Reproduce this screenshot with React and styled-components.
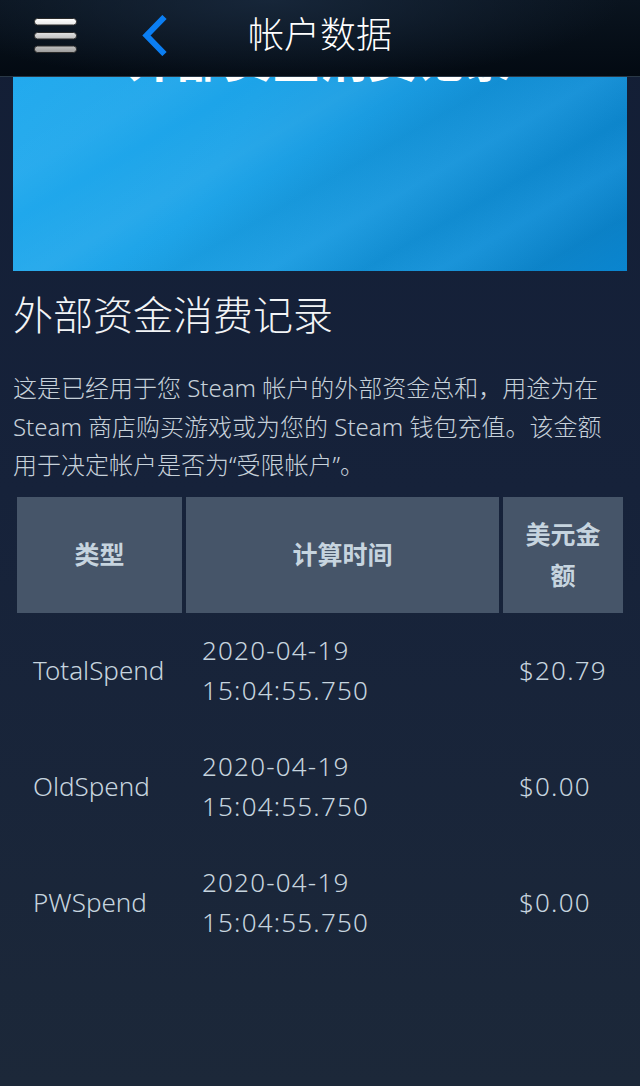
import React from 'react';
import styled, { createGlobalStyle } from 'styled-components';

const GlobalStyle = createGlobalStyle`
  html, body { margin: 0; padding: 0; background: #1b2838; }
  body { font-family: "Noto Sans", "Noto Sans CJK SC", sans-serif; }
  * { box-sizing: border-box; }
`;

const Page = styled.div`
  min-height: 1086px;
  display: flex;
  flex-direction: column;
  background: linear-gradient(180deg, #131e35 0%, #16223a 45%, #1c2839 100%);
`;

const Header = styled.header`
  height: 77px;
  border-bottom: 1px solid #2a3846;
  padding-bottom: 6px;
  display: grid;
  grid-template-columns: 1fr auto 1fr;
  align-items: center;
  background:
    radial-gradient(ellipse 55% 110% at 42% 0%, rgba(24, 40, 60, 0.9) 0%, rgba(24, 40, 60, 0) 100%),
    linear-gradient(180deg, #0a141f 0%, #030a12 100%);
`;

const NavLeft = styled.div`
  display: flex;
  align-items: center;
  padding-left: 34px;
  gap: 65px;
`;

const IconButton = styled.button`
  border: 0;
  background: none;
  padding: 0;
  display: flex;
  cursor: pointer;
`;

const Title = styled.h1`
  margin: 0;
  font-size: 36px;
  line-height: 1;
  font-weight: 300;
  color: #ffffff;
`;

const Content = styled.main`
  padding: 0 13px;
  display: flex;
  flex-direction: column;
`;

const Banner = styled.div`
  height: 194px;
  overflow: hidden;
  display: flex;
  justify-content: center;
  background:
    linear-gradient(150deg,
      rgba(255,255,255,0) 0%,
      rgba(255,255,255,0.04) 18%,
      rgba(255,255,255,0) 26%,
      rgba(255,255,255,0.05) 38%,
      rgba(255,255,255,0.01) 44%,
      rgba(0,0,0,0.03) 52%,
      rgba(255,255,255,0.045) 62%,
      rgba(0,0,0,0.04) 72%,
      rgba(255,255,255,0.04) 80%,
      rgba(0,0,0,0.05) 90%,
      rgba(0,0,0,0) 100%),
    linear-gradient(120deg, #22aaee 0%, #1ca3e8 35%, #1494db 65%, #0a85cf 100%);
`;

const BannerText = styled.div`
  margin-top: -42px;
  font-size: 48px;
  line-height: 48px;
  font-weight: 700;
  color: #ffffff;
  white-space: nowrap;
`;

const Heading = styled.h2`
  margin: 20px 0 0;
  font-size: 40px;
  line-height: 48px;
  font-weight: 300;
  color: #f2f4f6;
`;

const Description = styled.p`
  margin: 30px 10px 0 0;
  font-size: 24px;
  line-height: 38.5px;
  font-weight: 300;
  color: #c7d1da;
`;

const Table = styled.div`
  margin-top: 8px;
  padding: 4px;
  display: grid;
  grid-template-columns: 165px 1fr 120px;
  gap: 4px;
`;

const HeadCell = styled.div`
  background: #465569;
  padding: 17px 16px;
  display: flex;
  align-items: center;
  justify-content: center;
  text-align: center;
  font-size: 25px;
  line-height: 41px;
  font-weight: 700;
  color: #c6d4df;
`;

const Cell = styled.div`
  padding: 13px 16px 19px;
  display: flex;
  align-items: center;
  font-size: 26px;
  line-height: 40px;
  font-weight: 300;
  color: #c6d4df;
  letter-spacing: ${(p) => (p.$numeric ? '1.2px' : '0')};
`;

const HamburgerIcon = () => (
  <svg width="43" height="35" viewBox="0 0 43 35">
    <defs>
      <linearGradient id="hb1" x1="0" y1="0" x2="0" y2="1">
        <stop offset="0" stopColor="#ffffff" />
        <stop offset="1" stopColor="#e8e8e8" />
      </linearGradient>
      <linearGradient id="hb2" x1="0" y1="0" x2="0" y2="1">
        <stop offset="0" stopColor="#e2e2e2" />
        <stop offset="1" stopColor="#bdbdbd" />
      </linearGradient>
      <linearGradient id="hb3" x1="0" y1="0" x2="0" y2="1">
        <stop offset="0" stopColor="#c2c2c2" />
        <stop offset="1" stopColor="#9a9a9a" />
      </linearGradient>
    </defs>
    <rect x="0.5" y="0.5" width="42" height="6.5" rx="3" fill="url(#hb1)" stroke="#2a2a2a" strokeWidth="1" />
    <rect x="0.5" y="14.5" width="42" height="6.5" rx="3" fill="url(#hb2)" stroke="#2a2a2a" strokeWidth="1" />
    <rect x="0.5" y="28" width="42" height="6.5" rx="3" fill="url(#hb3)" stroke="#2a2a2a" strokeWidth="1" />
  </svg>
);

const BackIcon = () => (
  <svg width="25" height="41" viewBox="0 0 25 41">
    <polyline
      points="22.5,2 4.5,20.5 22.5,39"
      fill="none"
      stroke="#0b7ef2"
      strokeWidth="6"
      strokeLinejoin="miter"
      strokeLinecap="butt"
    />
  </svg>
);

const rows = [
  { type: 'TotalSpend', time: '2020-04-19 15:04:55.750', amount: '$20.79' },
  { type: 'OldSpend', time: '2020-04-19 15:04:55.750', amount: '$0.00' },
  { type: 'PWSpend', time: '2020-04-19 15:04:55.750', amount: '$0.00' },
];

export default function App() {
  return (
    <>
      <GlobalStyle />
      <Page>
        <Header>
          <NavLeft>
            <IconButton aria-label="菜单"><HamburgerIcon /></IconButton>
            <IconButton aria-label="返回"><BackIcon /></IconButton>
          </NavLeft>
          <Title>帐户数据</Title>
          <div />
        </Header>
        <Content>
          <Banner>
            <BannerText>外部资金消费记录</BannerText>
          </Banner>
          <Heading>外部资金消费记录</Heading>
          <Description>
            这是已经用于您 Steam 帐户的外部资金总和，用途为在 Steam 商店购买游戏或为您的 Steam 钱包充值。该金额用于决定帐户是否为“受限帐户”。
          </Description>
          <Table>
            <HeadCell>类型</HeadCell>
            <HeadCell>计算时间</HeadCell>
            <HeadCell>美元金额</HeadCell>
            {rows.map((r) => (
              <React.Fragment key={r.type}>
                <Cell>{r.type}</Cell>
                <Cell $numeric>{r.time}</Cell>
                <Cell $numeric>{r.amount}</Cell>
              </React.Fragment>
            ))}
          </Table>
        </Content>
      </Page>
    </>
  );
}
